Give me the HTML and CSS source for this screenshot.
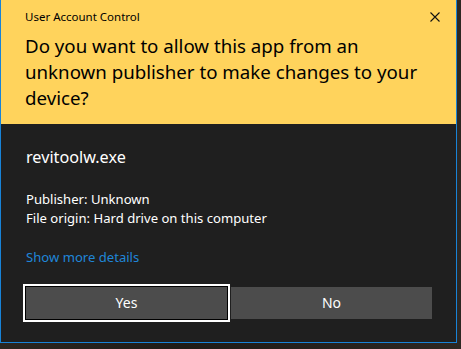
FILE: index.html
```html
<!DOCTYPE html>
<html>
	<head>
		<meta charset="utf-8">
		<title>User Account Control</title>
		<link rel="stylesheet" href="styles.css">
	</head>
	<body>
		<div class="uac">
			<div class="head">
				<div class="bar">
					<p class="caption">User Account Control</p>
					<span class="close">
						<svg width="10" height="10" viewBox="0 0 10 10"><path d="M0.5 0.5L9.5 9.5M9.5 0.5L0.5 9.5" stroke="#111" stroke-width="1.1" fill="none"/></svg>
					</span>
				</div>
				<p class="question">Do you want to allow this app from an unknown publisher to make changes to your device?</p>
			</div>
			<div class="main">
				<p class="app">revitoolw.exe</p>
				<p class="info">Publisher: Unknown<br>File origin: Hard drive on this computer</p>
				<p class="more">Show more details</p>
				<div class="btns">
					<div class="btn yes">Yes</div>
					<div class="btn">No</div>
				</div>
			</div>
		</div>
	</body>
</html>
```
FILE: styles.css
```css
*{margin:0;padding:0;box-sizing:border-box;}
body{background:linear-gradient(90deg,#2b2620,#1e1b17 40%,#2d2722);font-family:"Noto Sans","Open Sans",sans-serif;color:#fff;height:349px;overflow:hidden;}
.uac{width:457px;height:343px;border:1px solid #1883d7;border-top:0;background:#1f1f1f;}
.head{height:124px;background:#ffd35c;color:#000;padding:0 0 0 24px;}
.bar{display:flex;justify-content:space-between;align-items:center;height:34px;padding-right:16px;}
.caption{font-size:11.5px;line-height:16px;}
.close{display:flex;width:10px;height:10px;}
.question{font-size:18.7px;line-height:26px;padding-right:24px;margin-top:-1px;}
.main{padding:22px 24px 0 25px;}
.app{font-size:16.2px;line-height:22px;}
.info{font-size:13.1px;line-height:19px;margin-top:22px;}
.more{font-size:13.1px;line-height:19px;margin-top:20px;color:#1f86d8;}
.btns{display:flex;gap:4px;margin-top:20px;}
.btn{flex:1;height:32px;background:#4c4c4c;font-size:14px;line-height:32px;text-align:center;}
.btn.yes{box-shadow:0 0 0 1px #000,0 0 0 3px #fff;}
```
